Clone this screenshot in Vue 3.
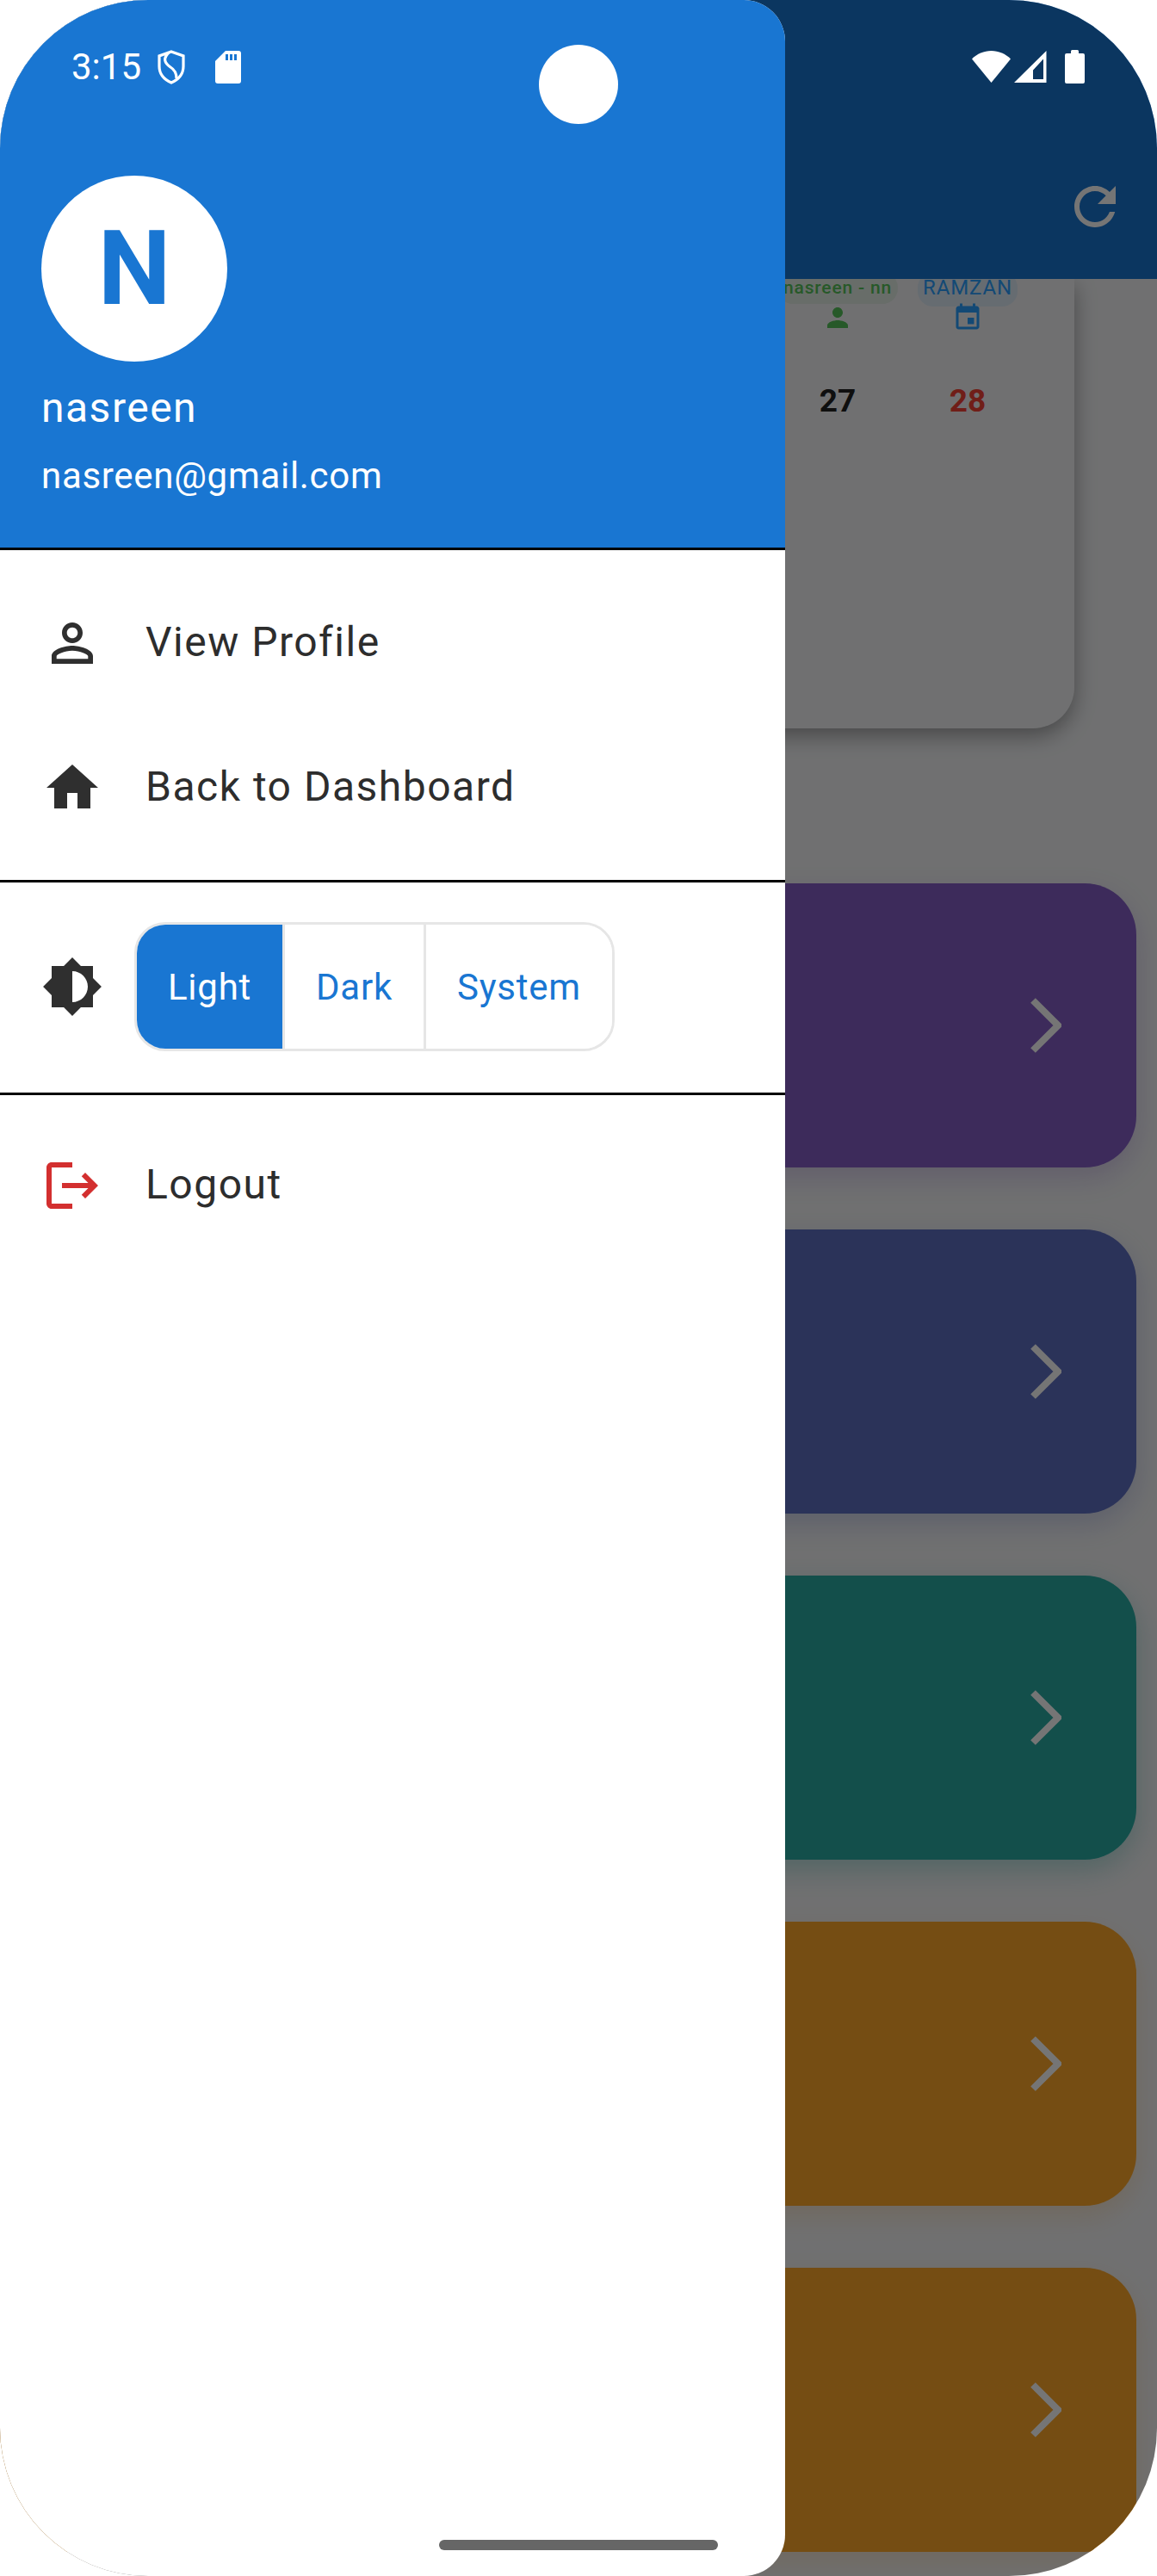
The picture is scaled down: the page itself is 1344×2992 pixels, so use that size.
<template>
  <div class="phone">
    <!-- page behind the drawer -->
    <div class="page">
      <header class="appbar">
        <svg class="refresh" viewBox="0 0 24 24" fill="currentColor">
          <path d="M17.65 6.35C16.2 4.9 14.21 4 12 4c-4.42 0-7.99 3.58-7.99 8s3.57 8 7.99 8c3.73 0 6.84-2.55 7.73-6h-2.08c-.82 2.33-3.04 4-5.65 4-3.31 0-6-2.69-6-6s2.69-6 6-6c1.66 0 3.14.69 4.22 1.78L13 11h7V4l-2.35 2.35z" />
        </svg>
      </header>

      <div class="calendar">
        <div class="day">
          <span class="chip green">nasreen - nn</span>
          <svg class="day-icon green-icon" viewBox="0 0 24 24" fill="currentColor">
            <path d="M12 12c2.21 0 4-1.79 4-4s-1.79-4-4-4-4 1.79-4 4 1.79 4 4 4zm0 2c-2.67 0-8 1.34-8 4v2h16v-2c0-2.66-5.33-4-8-4z" />
          </svg>
          <span class="num">27</span>
        </div>
        <div class="day">
          <span class="chip blue">RAMZAN</span>
          <svg class="day-icon blue-icon" viewBox="0 0 24 24" fill="currentColor">
            <path d="M17 12h-5v5h5v-5zM16 1v2H8V1H6v2H5c-1.11 0-1.99.9-1.99 2L3 19c0 1.1.89 2 2 2h14c1.1 0 2-.9 2-2V5c0-1.1-.9-2-2-2h-1V1h-2zm3 18H5V8h14v11z" />
          </svg>
          <span class="num red">28</span>
        </div>
      </div>

      <div class="cards">
        <div v-for="(tone, i) in cards" :key="i" class="card" :class="tone">
          <svg class="chevron" viewBox="0 0 36 64" fill="none" stroke="currentColor" stroke-width="8">
            <path d="M3 3l29 29L3 61" />
          </svg>
        </div>
      </div>
    </div>

    <div class="scrim"></div>

    <!-- navigation drawer -->
    <aside class="drawer">
      <div class="drawer-head">
        <div class="avatar">N</div>
        <div class="name">nasreen</div>
        <div class="email">nasreen@gmail.com</div>
      </div>

      <div class="group first">
        <div class="item">
          <svg class="icon" viewBox="0 0 24 24" fill="currentColor">
            <path d="M12 5.9c1.16 0 2.1.94 2.1 2.1s-.94 2.1-2.1 2.1S9.9 9.16 9.9 8s.94-2.1 2.1-2.1m0 9c2.97 0 6.1 1.46 6.1 2.1v1.1H5.9V17c0-.64 3.13-2.1 6.1-2.1M12 4C9.79 4 8 5.79 8 8s1.79 4 4 4 4-1.79 4-4-1.79-4-4-4zm0 9c-2.67 0-8 1.34-8 4v3h16v-3c0-2.66-5.33-4-8-4z" />
          </svg>
          <span class="label">View Profile</span>
        </div>
        <div class="item">
          <svg class="icon" viewBox="0 0 24 24" fill="currentColor">
            <path d="M10 20v-6h4v6h5v-8h3L12 3 2 12h3v8z" />
          </svg>
          <span class="label">Back to Dashboard</span>
        </div>
      </div>

      <div class="theme-row">
        <svg class="icon" viewBox="0 0 24 24" fill="currentColor">
          <path d="M20 15.31L23.31 12 20 8.69V4h-4.69L12 .69 8.69 4H4v4.69L.69 12 4 15.31V20h4.69L12 23.31 15.31 20H20v-4.69zM12 18V6c3.31 0 6 2.69 6 6s-2.69 6-6 6z" />
        </svg>
        <div class="toggle">
          <button
            v-for="mode in modes"
            :key="mode"
            class="seg"
            :class="{ active: mode === theme }"
          >{{ mode }}</button>
        </div>
      </div>

      <div class="group last">
        <div class="item">
          <svg class="icon logout" viewBox="0 0 24 24" fill="currentColor">
            <path d="M17 7l-1.41 1.41L18.17 11H8v2h10.17l-2.58 2.58L17 17l5-5zM4 5h8V3H4c-1.1 0-2 .9-2 2v14c0 1.1.9 2 2 2h8v-2H4V5z" />
          </svg>
          <span class="label">Logout</span>
        </div>
      </div>
    </aside>

    <!-- system bars -->
    <div class="status-left">
      <span class="clock">3:15</span>
      <svg class="shield" viewBox="0 0 32 40" fill="none" stroke="#fff" stroke-width="3.2">
        <path d="M16 2l14 5v12c0 9-6 15.5-14 19C8 34.5 2 28 2 19V7z" />
        <path d="M13 3C6 10 8 15 15 20c5 3 7 8 7 13" />
      </svg>
      <svg class="sd" viewBox="0 0 30 38" fill="#fff">
        <path d="M12 0h15a3 3 0 0 1 3 3v32a3 3 0 0 1-3 3H3a3 3 0 0 1-3-3V12z" />
        <path d="M12 4h3v7h-3zM17 4h3v7h-3zM22 4h3v7h-3z" fill="#1976d2" />
      </svg>
    </div>
    <div class="camera"></div>
    <div class="status-right">
      <svg class="wifi" viewBox="0 0 45 37" fill="#fff">
        <path d="M0 9.5C6 3.5 14 0 22.5 0S39 3.5 45 9.5L22.5 37z" />
      </svg>
      <svg class="signal" viewBox="0 0 38 37" fill="#fff" fill-rule="evenodd">
        <path d="M0 37L37.5 0v37zM22 33V22.500L34 9.500V33z" />
      </svg>
      <svg class="battery" viewBox="0 0 23 39" fill="#fff">
        <path d="M7 4V1.500A1.500 1.500 0 0 1 8.500 0h6A1.500 1.500 0 0 1 16 1.500V4h5a2 2 0 0 1 2 2v31a2 2 0 0 1-2 2H2a2 2 0 0 1-2-2V6a2 2 0 0 1 2-2z" />
      </svg>
    </div>
    <div class="home-bar"></div>
  </div>
</template>

<script setup>
import { ref } from 'vue'

const theme = ref('Light')
const modes = ['Light', 'Dark', 'System']

const cards = ['purple', 'indigo', 'teal', 'orange', 'orange']
</script>

<style>
html,
body {
  margin: 0;
  background: #fff;
}
</style>

<style scoped>
.phone {
  position: relative;
  width: 1344px;
  height: 2992px;
  border-radius: 172px;
  overflow: hidden;
  font-family: Roboto, "Liberation Sans", sans-serif;
  background: #fff;
}

/* Background page */
.page {
  width: 100%;
  height: 100%;
  background: #f3f4f6;
  display: flex;
  flex-direction: column;
}

.appbar {
  height: 324px;
  flex: none;
  background: #1976d2;
  color: #fff;
  position: relative;
  z-index: 2;
  display: flex;
  justify-content: flex-end;
  align-items: flex-end;
  padding: 0 36px 48px 0;
  box-sizing: border-box;
}

.refresh {
  width: 72px;
  height: 72px;
}

.calendar {
  flex: none;
  box-sizing: border-box;
  width: 1248px;
  height: 522px;
  margin-bottom: 180px;
  background: #f4f5f7;
  border-radius: 0 0 48px 48px;
  box-shadow: 0 9px 24px rgba(0, 0, 0, 0.35);
  display: flex;
  padding-left: 897.5px;
}

.day {
  width: 151px;
  flex: none;
  display: flex;
  flex-direction: column;
  align-items: center;
}

.chip {
  line-height: 36px;
  margin-top: -8px;
  border-radius: 18px;
  white-space: nowrap;
}

.chip.green {
  color: #55c25a;
  background: rgba(76, 175, 80, 0.1);
  height: 37px;
  margin-bottom: -2px;
  padding: 0 7px;
  font-size: 21px;
  font-weight: 500;
  letter-spacing: 0.8px;
}

.chip.blue {
  color: #2aa0ff;
  background: rgba(33, 150, 243, 0.1);
  height: 40px;
  margin-bottom: -5px;
  padding: 0 6px;
  font-size: 24px;
  letter-spacing: 0.9px;
}

.day-icon {
  width: 36px;
  height: 36px;
  flex: none;
}

.green-icon {
  color: #55c25a;
}

.blue-icon {
  color: #2aa0ff;
}

.num {
  margin-top: 57px;
  font-size: 37px;
  line-height: 44px;
  font-weight: 700;
  color: #212121;
}

.num.red {
  color: #f44336;
}

.cards {
  display: flex;
  flex-direction: column;
  gap: 72px;
  padding-right: 24px;
}

.card {
  height: 330px;
  border-radius: 60px;
  display: flex;
  align-items: center;
  justify-content: flex-end;
  padding-right: 87px;
  color: #fff;
}

.chevron {
  width: 36px;
  height: 64px;
}

.purple {
  background: #855fc7;
  box-shadow: 0 12px 30px rgba(126, 87, 194, 0.25);
}

.indigo {
  background: #5f6fc2;
  box-shadow: 0 12px 30px rgba(92, 107, 192, 0.25);
}

.teal {
  background: #2aaca4;
  box-shadow: 0 12px 30px rgba(38, 166, 154, 0.3);
}

.orange {
  background: #ffa82b;
  box-shadow: 0 12px 30px rgba(255, 167, 38, 0.2);
}

.scrim {
  position: absolute;
  inset: 0;
  background: rgba(0, 0, 0, 0.54);
  z-index: 3;
}

/* Drawer */
.drawer {
  position: absolute;
  top: 0;
  left: 0;
  bottom: 0;
  width: 912px;
  background: #fff;
  border-radius: 0 48px 48px 0;
  overflow: hidden;
  z-index: 4;
  color: #2d2d2d;
}

.drawer-head {
  box-sizing: border-box;
  height: 639px;
  background: #1976d2;
  border-bottom: 3px solid #000;
  color: #fff;
  padding: 204px 0 0 48px;
}

.avatar {
  width: 216px;
  height: 216px;
  border-radius: 50%;
  background: #fff;
  color: #1976d2;
  font-size: 120px;
  font-weight: 700;
  display: flex;
  align-items: center;
  justify-content: center;
}

.name {
  margin-top: 26px;
  font-size: 48px;
  line-height: 56px;
  letter-spacing: 1.5px;
}

.email {
  margin-top: 23px;
  font-size: 42px;
  line-height: 56px;
  letter-spacing: 0.7px;
}

.group {
  padding: 24px 0;
  border-bottom: 3px solid #000;
}

.group.first {
  padding-bottom: 23px;
}

.group.last {
  padding-top: 21px;
  border-bottom: none;
}

.item {
  height: 168px;
  display: flex;
  align-items: center;
  gap: 49px;
  padding-left: 48px;
  font-size: 48px;
  letter-spacing: 1.5px;
}

.label {
  margin-bottom: 4px;
}

.icon {
  width: 72px;
  height: 72px;
  flex: none;
  color: #2f2f2f;
}

.logout {
  color: #d32f2f;
}

.theme-row {
  height: 247px;
  box-sizing: border-box;
  border-bottom: 3px solid #000;
  display: flex;
  align-items: center;
  gap: 36px;
  padding: 0 0 2px 48px;
}

.toggle {
  display: flex;
  height: 150px;
  box-sizing: border-box;
  border: 3px solid #e6e6e6;
  border-radius: 36px;
  overflow: hidden;
}

.seg {
  border: none;
  background: #fff;
  color: #1976d2;
  font-family: inherit;
  font-size: 42px;
  letter-spacing: 0.75px;
  padding: 0 36px;
  border-left: 3px solid #e6e6e6;
}

.seg:first-child {
  border-left: none;
}

.seg.active {
  background: #1976d2;
  color: #fff;
}

/* System bars */
.status-left {
  position: absolute;
  z-index: 5;
  top: 58px;
  left: 83px;
  display: flex;
  align-items: center;
  color: #fff;
  height: 40px;
}

.clock {
  font-size: 42px;
  line-height: 40px;
  width: 100px;
}

.shield {
  width: 32px;
  height: 40px;
}

.sd {
  width: 30px;
  height: 38px;
  margin-left: 35px;
}

.camera {
  position: absolute;
  z-index: 5;
  top: 52px;
  left: 626px;
  width: 92px;
  height: 92px;
  border-radius: 50%;
  background: #fff;
}

.status-right {
  position: absolute;
  z-index: 5;
  top: 58px;
  left: 1129px;
  display: flex;
  align-items: flex-start;
}

.wifi {
  width: 45px;
  height: 37px;
  margin-top: 1px;
}

.signal {
  width: 38px;
  height: 37px;
  margin-top: 1px;
  margin-left: 4px;
}

.battery {
  width: 23px;
  height: 39px;
  margin-left: 21px;
}

.home-bar {
  position: absolute;
  z-index: 5;
  left: 510px;
  bottom: 30px;
  width: 324px;
  height: 12px;
  border-radius: 6px;
  background: #666;
}
</style>
